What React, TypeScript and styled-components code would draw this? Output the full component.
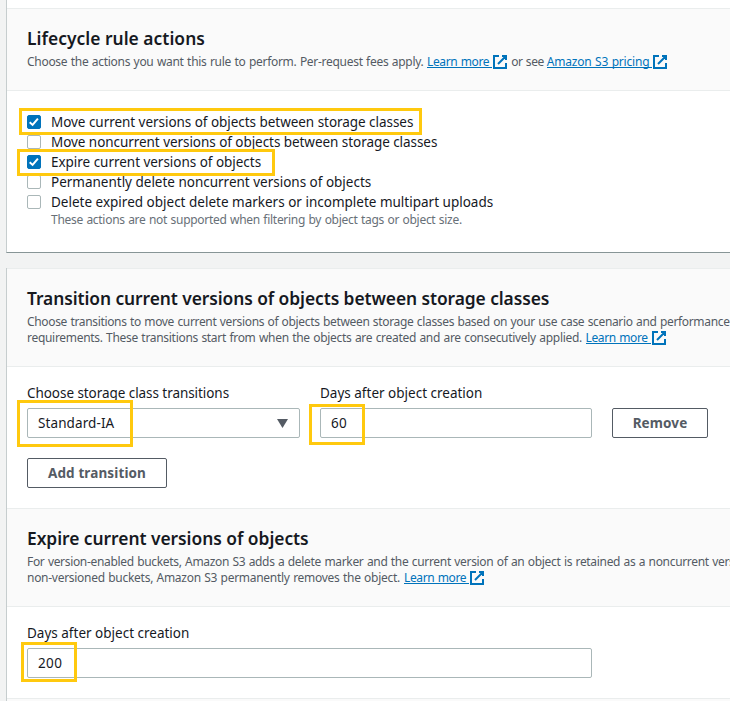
import React from 'react';
import styled, { createGlobalStyle, css } from 'styled-components';

const GlobalStyle = createGlobalStyle`
  * { box-sizing: border-box; }
  body {
    margin: 0;
    background: #f2f3f3;
    color: #16191f;
    font-family: "Noto Sans", "Open Sans", sans-serif;
    font-size: 13.5px;
    overflow: hidden;
  }
`;

const Page = styled.main`
  display: flex;
  flex-direction: column;
  gap: 15px;
  height: 701px;
  padding-left: 6px;
  overflow: hidden;
  white-space: nowrap;
`;

const Card = styled.section<{ $continued?: boolean }>`
  flex: none;
  background: #fff;
  border-left: 1px solid #c6cdce;
  border-bottom: 1px solid #879596;
  ${(p) => p.$continued && css`padding-top: 8px;`}
`;

const SectionHeader = styled.header`
  padding: 18px 0 20px 20px;
  background: #fafafa;
  border-top: 1px solid #eaeded;
  border-bottom: 1px solid #eaeded;
`;

const Title = styled.h2<{ $track: number }>`
  margin: 0 0 5px;
  font-size: 17.4px;
  line-height: 22px;
  font-weight: 600;
  letter-spacing: ${(p) => p.$track}px;
`;

const Description = styled.p`
  margin: 0;
  color: #545b64;
  font-size: 12px;
  line-height: 16px;
  word-spacing: 0.6px;
`;

const DescriptionLine = styled.span`
  display: flex;
  height: 16px;
`;

const Text = styled.span<{ $track: number; $gap?: number }>`
  letter-spacing: ${(p) => p.$track}px;
  margin-right: ${(p) => p.$gap ?? 0}px;
`;

const Link = styled.a`
  display: flex;
  height: 16px;
  color: #0073bb;
`;

const LinkText = styled.span<{ $track: number; $width: number }>`
  width: ${(p) => p.$width}px;
  height: 14px;
  border-bottom: 1px solid #0073bb;
  letter-spacing: ${(p) => p.$track}px;
`;

const Icon = styled.svg`
  flex: none;
  width: 16px;
  height: 16px;
  fill: none;
  stroke: #0073bb;
  stroke-width: 2;
`;

const ExternalLink = ({ children, track, width }: { children: string; track: number; width: number }) => (
  <Link>
    <LinkText $track={track} $width={width}>{children}</LinkText>
    <Icon viewBox="0 0 16 16">
      <path d="M10 2h4v4M6 10l8-8M14 9.05V14H2V2h5" />
    </Icon>
  </Link>
);

const OptionList = styled.div`
  padding: 21px 0 24px 20px;
`;

const Option = styled.label`
  position: relative;
  display: flex;
  align-items: center;
  gap: 10px;
  width: max-content;
  height: 20px;
  line-height: 20px;
`;

const Box = styled.span<{ $checked: boolean }>`
  display: flex;
  width: 14px;
  height: 14px;
  border: 1px solid ${(p) => (p.$checked ? '#0073bb' : '#aab7b8')};
  border-radius: 2px;
  background: ${(p) => (p.$checked ? '#0073bb' : '#fff')};
`;

const Tick = styled.svg`
  width: 12px;
  height: 12px;
  fill: none;
  stroke: #fff;
  stroke-width: 2;
`;

const OptionNote = styled.p`
  margin: 0 0 0 24px;
  color: #687078;
  font-size: 12px;
  line-height: 16px;
  word-spacing: 0.6px;
`;

const FormBody = styled.div<{ $bottom: number }>`
  padding: 16px 0 ${(p) => p.$bottom}px 20px;
`;

const FieldRow = styled.div`
  display: flex;
  align-items: flex-end;
  gap: 20px;
  margin-bottom: 20px;
`;

const Field = styled.div<{ $width: number }>`
  width: ${(p) => p.$width}px;
`;

const Label = styled.div<{ $track: number }>`
  margin-bottom: 5px;
  line-height: 20px;
  letter-spacing: ${(p) => p.$track}px;
`;

const Control = styled.div`
  position: relative;
  display: flex;
  align-items: center;
  justify-content: space-between;
  height: 30px;
  padding: 0 11px 0 10px;
  border: 1px solid #aab7b8;
  border-radius: 2px;
  background: #fff;
  line-height: 20px;
`;

const Caret = styled.svg`
  width: 11px;
  height: 9px;
  fill: #545b64;
`;

const Button = styled.button<{ $width: number }>`
  width: ${(p) => p.$width}px;
  height: 30px;
  padding: 0;
  border: 1px solid #545b64;
  border-radius: 2px;
  background: #fff;
  color: #545b64;
  font: 700 13.5px/20px "Noto Sans", "Open Sans", sans-serif;
  letter-spacing: 0.12px;
`;

/* Callout frame laid over the control it draws attention to. */
const Highlight = styled.span<{ $left: number; $top: number; $width: number; $height: number }>`
  position: absolute;
  z-index: 1;
  left: ${(p) => p.$left}px;
  top: ${(p) => p.$top}px;
  width: ${(p) => p.$width}px;
  height: ${(p) => p.$height}px;
  border: 3px solid #ffc90e;
  pointer-events: none;
`;

const options = [
  { text: 'Move current versions of objects between storage classes', track: -0.042, frame: [-8, -4, 403, 27] },
  { text: 'Move noncurrent versions of objects between storage classes', track: -0.055 },
  { text: 'Expire current versions of objects', track: -0.03, frame: [-10, -3, 258, 27] },
  { text: 'Permanently delete noncurrent versions of objects', track: -0.01 },
  { text: 'Delete expired object delete markers or incomplete multipart uploads', track: 0 },
];

export default function App() {
  return (
    <>
      <GlobalStyle />
      <Page>
        <Card $continued>
          <SectionHeader>
            <Title $track={0.03}>Lifecycle rule actions</Title>
            <Description>
              <DescriptionLine>
                <Text $track={-0.29} $gap={3.5}>Choose the actions you want this rule to perform. Per-request fees apply.</Text>
                <ExternalLink track={-0.36} width={65}>Learn more</ExternalLink>
                <Text $track={-0.45} $gap={3}>&nbsp;or see</Text>
                <ExternalLink track={-0.2} width={105.5}>Amazon S3 pricing</ExternalLink>
              </DescriptionLine>
            </Description>
          </SectionHeader>
          <OptionList>
            {options.map((o) => (
              <Option key={o.text}>
                <Box $checked={!!o.frame}>
                  {o.frame && (
                    <Tick viewBox="0 0 12 12"><path d="M1.7 6.2 4.6 8.9 9.9 2.6" /></Tick>
                  )}
                </Box>
                <Text $track={o.track}>{o.text}</Text>
                {o.frame && (
                  <Highlight $left={o.frame[0]} $top={o.frame[1]} $width={o.frame[2]} $height={o.frame[3]} />
                )}
              </Option>
            ))}
            <OptionNote>
              <Text $track={-0.285}>These actions are not supported when filtering by object tags or object size.</Text>
            </OptionNote>
          </OptionList>
        </Card>

        <Card>
          <SectionHeader>
            <Title $track={-0.08}>Transition current versions of objects between storage classes</Title>
            <Description>
              <DescriptionLine>
                <Text $track={-0.338}>Choose transitions to move current versions of objects between storage classes based on your use case scenario and performance</Text>
              </DescriptionLine>
              <DescriptionLine>
                <Text $track={-0.3} $gap={3.5}>requirements. These transitions start from when the objects are created and are consecutively applied.</Text>
                <ExternalLink track={-0.36} width={65}>Learn more</ExternalLink>
              </DescriptionLine>
            </Description>
          </SectionHeader>
          <FormBody $bottom={20}>
            <FieldRow>
              <Field $width={273}>
                <Label $track={-0.06}>Choose storage class transitions</Label>
                <Control>
                  <Text $track={0.1}>Standard-IA</Text>
                  <Caret viewBox="0 0 11 9"><path d="M0 0h11L5.5 9z" /></Caret>
                  <Highlight $left={-11} $top={-9} $width={116} $height={47} />
                </Control>
              </Field>
              <Field $width={272}>
                <Label $track={0}>Days after object creation</Label>
                <Control>
                  <Text $track={0.4}>60</Text>
                  <Highlight $left={-12} $top={-5} $width={56} $height={41} />
                </Control>
              </Field>
              <Button $width={96}>Remove</Button>
            </FieldRow>
            <Button $width={140}>Add transition</Button>
          </FormBody>

          <SectionHeader>
            <Title $track={-0.04}>Expire current versions of objects</Title>
            <Description>
              <DescriptionLine>
                <Text $track={-0.322}>For version-enabled buckets, Amazon S3 adds a delete marker and the current version of an object is retained as a noncurrent version. For</Text>
              </DescriptionLine>
              <DescriptionLine>
                <Text $track={-0.278} $gap={4}>non-versioned buckets, Amazon S3 permanently removes the object.</Text>
                <ExternalLink track={-0.36} width={65}>Learn more</ExternalLink>
              </DescriptionLine>
            </Description>
          </SectionHeader>
          <FormBody $bottom={20}>
            <Field $width={565}>
              <Label $track={0}>Days after object creation</Label>
              <Control>
                <Text $track={0.4}>200</Text>
                <Highlight $left={-7} $top={-7} $width={56} $height={40} />
              </Control>
            </Field>
          </FormBody>
          <SectionHeader />
        </Card>
      </Page>
    </>
  );
}
